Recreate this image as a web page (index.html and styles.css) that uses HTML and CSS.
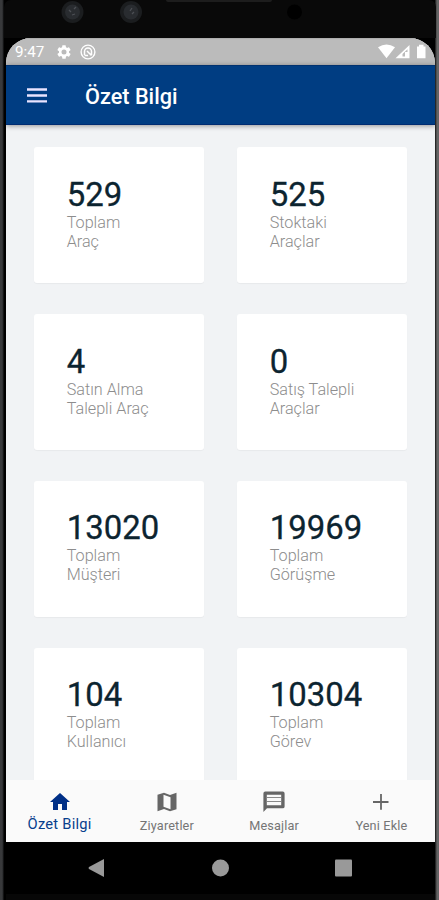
FILE: index.html
```html
<!DOCTYPE html>
<html lang="tr">
<head>
<meta charset="utf-8">
<title>Özet Bilgi</title>
<link rel="stylesheet" href="styles.css">
</head>
<body>
<div class="phone">
  <div class="bezel">
    <span class="earpiece"></span>
    <svg class="lenses" viewBox="0 0 439 38">
      <g fill="#1b1d1f"><circle cx="72.500" cy="12" r="11"/><circle cx="131" cy="12" r="11"/></g>
      <g fill="#292c30"><circle cx="72.500" cy="12" r="7.500"/><circle cx="131" cy="12" r="7.500"/></g>
      <g fill="none" stroke="#4c4f54" stroke-width="1.300"><path d="M69 10l2 2M74 9l2-2M72 15l3-1M130 11l2-3M132 14l2-2"/></g>
      <circle cx="294.500" cy="12" r="7.500" fill="#000"/>
    </svg>
  </div>
  <div class="screen">
    <div class="status">
      <span class="clock">9:47</span>
      <svg class="gear" viewBox="2 2 20 20"><path fill="#fff" d="M19.140 12.940c.04-.3.060-.61.060-.94s-.02-.64-.07-.94l2.030-1.580a.5.5 0 0 0 .12-.61l-1.920-3.320a.5.5 0 0 0-.59-.22l-2.390.96a7 7 0 0 0-1.620-.94l-.36-2.540a.5.5 0 0 0-.48-.41h-3.840a.5.5 0 0 0-.47.410l-.36 2.540a7 7 0 0 0-1.620.94l-2.390-.96a.5.5 0 0 0-.59.220L2.740 8.870a.5.5 0 0 0 .12.610l2.030 1.580a7 7 0 0 0 0 1.880l-2.030 1.580a.5.5 0 0 0-.12.610l1.920 3.320c.12.220.37.290.59.220l2.390-.96c.5.380 1.030.7 1.620.94l.36 2.540c.05.240.24.410.48.410h3.840c.24 0 .44-.17.470-.41l.36-2.540a7 7 0 0 0 1.620-.94l2.390.96c.22.080.47 0 .59-.22l1.920-3.320a.5.5 0 0 0-.12-.61zM12 15.600a3.600 3.600 0 1 1 0-7.200 3.600 3.600 0 0 1 0 7.200z"/></svg>
      <svg class="debug" viewBox="0 0 16 16" fill="none" stroke="#fff"><circle cx="8" cy="8" r="6.900" stroke-width="1.400"/><path stroke-width="1.500" d="M4.500 11V7.500A3.500 3.500 0 0 1 11.500 7.500V11M7 7l4.500 4.500M4.500 11.500H8"/></svg>
      <svg class="signals" viewBox="0 0 50 16"><path fill="#fff" d="M0 3.200Q8.500-2 17 3.200L8.500 14.300z"/><path fill="#fff" fill-rule="evenodd" d="M17.500 14.300L31.500 1v13.300zM24.500 12.500h2.500V8h2.500V5.200l-5 4.800z"/><path fill="#fff" d="M39 2.500h2V.8h4.500v1.700h2v11.800H39z"/></svg>
    </div>
    <header class="appbar">
      <svg class="menu" viewBox="0 0 20 15" stroke="#e9e4ff" stroke-width="2.300"><path d="M0 1.500h20M0 7.500h20M0 13.300h20"/></svg>
      <h1>Özet Bilgi</h1>
    </header>
    <main class="cards">
      <section class="card"><b>529</b><p>Toplam<br>Araç</p></section>
      <section class="card"><b>525</b><p>Stoktaki<br>Araçlar</p></section>
      <section class="card"><b>4</b><p>Satın Alma<br>Talepli Araç</p></section>
      <section class="card"><b>0</b><p>Satış Talepli<br>Araçlar</p></section>
      <section class="card"><b>13020</b><p>Toplam<br>Müşteri</p></section>
      <section class="card"><b>19969</b><p>Toplam<br>Görüşme</p></section>
      <section class="card"><b>104</b><p>Toplam<br>Kullanıcı</p></section>
      <section class="card"><b>10304</b><p>Toplam<br>Görev</p></section>
    </main>
    <nav class="tabs">
      <a class="tab active"><svg viewBox="0 0 24 24"><path d="M10 20v-6h4v6h5v-8h3L12 3 2 12h3v8z"/></svg><span>Özet Bilgi</span></a>
      <a class="tab"><svg viewBox="0 0 24 24"><path fill-rule="evenodd" d="M21.500 2.800L15 4.900 9 2.700 2.500 4.800V21.200L9 19.100l6 2.200 6.500-2.100zM15.500 19.200l-7-2.500V4.800l7 2.500z"/></svg><span>Ziyaretler</span></a>
      <a class="tab"><svg viewBox="0 0 24 24"><path fill-rule="evenodd" d="M3.300 1.500h17.400A1.900 1.900 0 0 1 22.600 3.400v13a1.900 1.900 0 0 1-1.900 1.900H5L1.400 22V3.400a1.900 1.900 0 0 1 1.900-1.900zM4.800 4.800v10.400h14.400V4.800z"/><path fill="#8a8a8a" d="M5 7h14v1H5zM5 11h14v1H5z"/></svg><span>Mesajlar</span></a>
      <a class="tab"><svg viewBox="0 0 24 24"><path d="M19.500 12.900h-6.600v6.900h-1.800v-6.900H4v-1.800h7.100V4h1.800v7.100h6.600z"/></svg><span>Yeni Ekle</span></a>
    </nav>
  </div>
  <div class="system">
    <svg viewBox="0 0 17 20"><path fill="#999" d="M16 1v18L1 11Q0 10 1 9z"/></svg>
    <svg viewBox="0 0 17 20"><circle cx="8.500" cy="10" r="8.500" fill="#999"/></svg>
    <svg viewBox="0 0 17 20"><rect y="1.500" width="17" height="17" rx="1" fill="#999"/></svg>
  </div>
</div>
</body>
</html>
```
FILE: styles.css
```css
* { box-sizing: border-box; }
body { margin: 0; background: #050505; font-family: Roboto, sans-serif; }
.phone {
  display: flex; flex-direction: column;
  height: 900px; width: 439px; overflow: hidden;
  background: linear-gradient(90deg, #38393b 0 2px, #252628 3px, #000 4px 435px, #111 435px, #666 437px, #626264 439px);
}
.bezel {
  position: relative; flex: 0 0 38px; margin: 0 3px 0 4px;
  background: #090909; border-radius: 7px 7px 0 0;
}
.lenses { display: block; width: 439px; height: 38px; margin-left: -4px; }
.earpiece { position: absolute; left: 162px; top: 0; width: 106px; height: 2px; background: #1d1d1d; border-radius: 0 0 5px 5px; }
.screen {
  display: flex; flex-direction: column; flex: 0 0 804px;
  width: 429px; margin-left: 6px; overflow: hidden;
  background: #f1f3f5; border-radius: 25px 25px 0 0;
}
.status {
  flex: 0 0 27px; display: flex; align-items: center;
  padding: 0 8px 0 9px; background: #bbb; border-top: 1px solid #adadad;
  color: #fff;
}
.clock { width: 42px; font-size: 15.200px; line-height: 26px; }
.gear { width: 14px; height: 14px; margin-right: 9px; }
.debug { width: 16px; height: 16px; }
.signals { width: 50px; height: 16px; margin-left: auto; margin-right: -1px; }
.appbar {
  flex: 0 0 60px; display: flex; align-items: center;
  padding-left: 21px; background: #003d82; color: #fff;
  border-top: 1px solid #00316f; border-bottom: 1px solid #002c72;
  box-shadow: 0 1px 5px #0006; z-index: 1;
}
.menu { width: 20px; height: 15px; margin-right: 38px; }
h1 { margin: 3px 0 0; font-size: 21.700px; font-weight: 500; line-height: 30px; }
.cards {
  flex: 1; min-height: 0; overflow: hidden;
  display: grid; grid-template-columns: 170px 170px; grid-auto-rows: 136px;
  gap: 31px 33px; align-content: start; padding: 22px 28px 0;
}
.card {
  padding: 28px 0 0 32.700px; background: #fff; border-radius: 3px;
  box-shadow: 0 1px 1px #0000000a;
}
.card:nth-child(n+5) { padding-top: 27px; }
.card b { display: block; font-size: 32.900px; line-height: 40px; font-weight: 400; color: #0c2430; -webkit-text-stroke: .3px #0c2430; }
.card p { margin: -2px 0 0; font-size: 16.200px; line-height: 19.300px; font-weight: 300; color: #8d8d8d; }
.tabs { flex: 0 0 62px; display: grid; grid-template-columns: repeat(4, 1fr); background: #fafafa; }
.tab {
  display: flex; flex-direction: column; align-items: center;
  padding-top: 10px; font-size: 12.700px; line-height: 18px; color: #757575;
  letter-spacing: .15px;
}
.tab svg { width: 24px; height: 24px; fill: #666; }
.tab span { margin-top: 3px; }
.active { font-size: 14.700px; color: #073f8c; letter-spacing: .25px; }
.active svg { fill: #002f87; }
.active span { margin-top: 1px; }
.system {
  flex: 0 0 58px; display: flex; justify-content: space-between;
  padding: 16px 83px 0 82px; margin: 0 4px 0 6px; background: linear-gradient(#000 0 52px, #070707 52px);
}
.system svg { width: 17px; height: 20px; }
```
